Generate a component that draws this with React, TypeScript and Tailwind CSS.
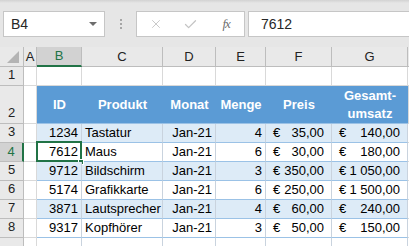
import React from "react";
import { X, Check } from "lucide-react";

type Row = { n: number; id: string; p: string; m: string; q: string; price: string; total: string };
const rows: Row[] = [
  { n: 3, id: "1234", p: "Tastatur", m: "Jan-21", q: "4", price: "35,00", total: "140,00" },
  { n: 4, id: "7612", p: "Maus", m: "Jan-21", q: "6", price: "30,00", total: "180,00" },
  { n: 5, id: "9712", p: "Bildschirm", m: "Jan-21", q: "3", price: "350,00", total: "1 050,00" },
  { n: 6, id: "5174", p: "Grafikkarte", m: "Jan-21", q: "6", price: "250,00", total: "1 500,00" },
  { n: 7, id: "3871", p: "Lautsprecher", m: "Jan-21", q: "4", price: "60,00", total: "240,00" },
  { n: 8, id: "9317", p: "Kopfhörer", m: "Jan-21", q: "3", price: "50,00", total: "150,00" },
];

const colHeads = ["A", "B", "C", "D", "E", "F", "G"];

export default function App() {
  const gridCell = "border-r border-b border-[#d9d9d9] bg-white";
  return (
    <div
      className="w-[409px] h-[246px] overflow-hidden bg-[#e6e6e6] text-[13px] text-black"
      style={{ fontFamily: '"Liberation Sans", Arial, sans-serif' }}
    >
      {/* Formula bar */}
      <div className="h-[47px] flex flex-col">
        <div className="h-[3px] bg-gradient-to-b from-[#d2d2d2] to-[#e6e6e6]" />
        <div className="flex items-start pt-[8px]">
          <div className="ml-[3px] w-[102px] h-[26px] bg-white border border-[#c6c6c6] flex items-center justify-between pl-[7px] pr-[7px]">
            <span className="text-[14px] text-[#262626]">B4</span>
            <span className="w-0 h-0 border-l-[4px] border-r-[4px] border-t-[4px] border-l-transparent border-r-transparent border-t-[#6d6d6d]" />
          </div>
          <div className="w-[31px] h-[26px] flex flex-col items-center justify-center gap-[2px]">
            <span className="w-[2px] h-[2px] bg-[#a6a6a6]" />
            <span className="w-[2px] h-[2px] bg-[#a6a6a6]" />
            <span className="w-[2px] h-[2px] bg-[#a6a6a6]" />
          </div>
          <div className="w-[109px] h-[26px] bg-white border border-[#c6c6c6] flex items-center">
            <div className="w-[36px] flex justify-center pl-[2px]">
              <X size={14} strokeWidth={1.4} color="#bdbdbd" />
            </div>
            <div className="w-[36px] flex justify-center">
              <Check size={15} strokeWidth={2} color="#c4c4c4" />
            </div>
            <div className="w-[36px] flex justify-center">
              <span
                className="italic text-[13px] text-[#6f6f6f] tracking-[-1px]"
                style={{ fontFamily: '"Liberation Serif", "Times New Roman", serif' }}
              >
                fx
              </span>
            </div>
          </div>
          <div className="ml-[3px] flex-1 h-[26px] bg-white border border-[#c6c6c6] border-r-0 flex items-center pl-[12px]">
            <span className="text-[14px] text-[#262626]">7612</span>
          </div>
        </div>
      </div>

      {/* Sheet grid */}
      <div
        className="grid"
        style={{
          gridTemplateColumns: "24px 13px 45px 81px 53px 50px 66px 76px 1fr",
          gridTemplateRows: "20px 19px 38px repeat(6, 19px) 1fr",
          height: 199,
        }}
      >
        {/* Header row */}
        <div className="border-r border-b border-[#bdbdbd] bg-[#e9e9e9] relative">
          <svg width="24" height="20" className="absolute left-0 top-0">
            <polygon points="7,16 19,4 19,16" fill="#b4b4b4" />
          </svg>
        </div>
        {colHeads.map((c) =>
          c === "B" ? (
            <div
              key={c}
              className="border-r border-[#bdbdbd] border-b-2 border-b-[#217346] bg-[#d2d2d2] flex items-center justify-center text-[#217346] text-[13px]"
            >
              {c}
            </div>
          ) : (
            <div
              key={c}
              className="border-r border-b border-[#bdbdbd] bg-[#e9e9e9] flex items-center justify-center text-[13px] text-[#222]"
            >
              {c}
            </div>
          )
        )}
        <div className="border-b border-[#bdbdbd] bg-[#e9e9e9]" />

        {/* Row 1 */}
        <RowHead n={1} />
        {Array.from({ length: 7 }).map((_, i) => (
          <div key={i} className={gridCell} />
        ))}
        <div className="border-b border-[#d9d9d9] bg-white" />

        {/* Row 2 - table header */}
        <RowHead n={2} />
        <div className={gridCell} />
        {["ID", "Produkt", "Monat", "Menge", "Preis"].map((h) => (
          <div
            key={h}
            className="bg-[#5b9bd5] border-b border-[#9bc2e6] flex items-center justify-center text-white font-bold"
          >
            {h}
          </div>
        ))}
        <div className="bg-[#5b9bd5] border-b border-[#9bc2e6] flex flex-col items-center justify-center text-white font-bold leading-[18px]">
          <span>Gesamt-</span>
          <span>umsatz</span>
        </div>
        <div className="bg-white border-b border-l border-[#d9d9d9]" />

        {/* Data rows */}
        {rows.map((r) => {
          const band = r.n % 2 === 1 ? "bg-[#ddebf7]" : "bg-white";
          const c = `${band} border-r border-b border-r-[#c9d3de] border-b-[#9bc2e6] flex items-end pb-[1px] leading-[16px]`;
          const active = r.n === 4;
          return (
            <React.Fragment key={r.n}>
              <RowHead n={r.n} active={active} />
              <div className={gridCell} />
              <div className={`${c} justify-end pr-[3px] relative`}>
                {r.id}
                {active && (
                  <>
                    <div className="absolute left-[-1px] top-[-2px] right-[-1px] bottom-[-1px] border-2 border-[#217346] pointer-events-none" />
                    <div className="absolute right-[-3px] bottom-[-4px] w-[6px] h-[6px] bg-[#217346] border border-white" />
                  </>
                )}
              </div>
              <div className={`${c} justify-start pl-[3px]`}>{r.p}</div>
              <div className={`${c} justify-end pr-[3px]`}>{r.m}</div>
              <div className={`${c} justify-end pr-[3px]`}>{r.q}</div>
              <div className={`${c} justify-between px-[7px]`}>
                <span>€</span>
                <span>{r.price}</span>
              </div>
              <div className={`${c} justify-between px-[7px]`}>
                <span>€</span>
                <span>{r.total}</span>
              </div>
              <div className="bg-white border-b border-[#d9d9d9]" />
            </React.Fragment>
          );
        })}

        {/* Row 9 partial */}
        <div className="border-r border-[#bdbdbd] bg-[#e9e9e9]" />
        <div className="border-r border-[#d9d9d9] bg-white" />
        {Array.from({ length: 6 }).map((_, i) => (
          <div key={i} className="border-r border-[#c9d3de] bg-white" />
        ))}
        <div className="bg-white" />
      </div>
    </div>
  );
}

function RowHead({ n, active }: { n: number; active?: boolean }) {
  if (active) {
    return (
      <div className="bg-[#d2d2d2] border-r-2 border-r-[#217346] border-b border-b-[#bdbdbd] flex items-center justify-center text-[#217346] text-[13px]">
        {n}
      </div>
    );
  }
  return (
    <div className="bg-[#e9e9e9] border-r border-b border-[#bdbdbd] flex items-end justify-center pb-[1px] text-[13px] text-[#222]">
      {n}
    </div>
  );
}
